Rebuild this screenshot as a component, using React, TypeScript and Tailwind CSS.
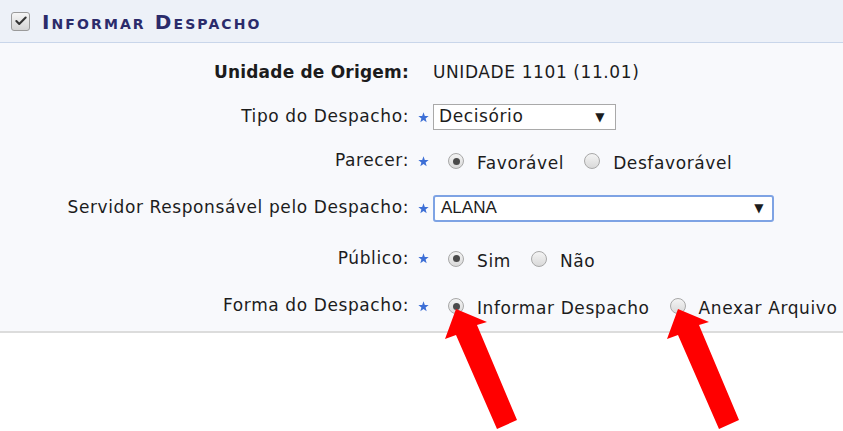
import { Check } from 'lucide-react';

const font = { fontFamily: '"DejaVu Sans", Verdana, sans-serif' };

function Star() {
  return (
    <svg viewBox="0 0 10 10" className="w-[11px] h-[11px]">
      <polygon
        points="5,0.3 6.2,3.6 9.7,3.7 6.9,5.8 7.9,9.3 5,7.2 2.1,9.3 3.1,5.8 0.3,3.7 3.8,3.6"
        fill="#3d6fd6"
      />
    </svg>
  );
}

function Radio({ checked }: { checked?: boolean }) {
  return (
    <span className="w-[16px] h-[16px] rounded-full border border-[#a8a8a8] bg-gradient-to-b from-[#f4f4f4] to-[#d9d9d9] flex items-center justify-center shrink-0">
      {checked && <span className="w-[7px] h-[7px] rounded-full bg-[#4a4a4a]" />}
    </span>
  );
}

function Option({ checked, label, first }: { checked?: boolean; label: string; first?: boolean }) {
  return (
    <span className={`flex items-center ${first ? 'ml-[15px]' : 'ml-[20px]'}`}>
      <Radio checked={checked} />
      <span className="ml-[13px] mt-[6px]">{label}</span>
    </span>
  );
}

function Row({ label, required = true, bold, h, children }: { label: string; required?: boolean; bold?: boolean; h: string; children: React.ReactNode }) {
  return (
    <div className={`flex items-center ${h}`}>
      <div className={`w-[409px] text-right ${bold ? 'font-bold tracking-[0.2px]' : ''}`}>{label}</div>
      <div className="w-[24px] flex pl-[9px]">{required && <Star />}</div>
      <div className="flex items-center">{children}</div>
    </div>
  );
}

export default function App() {
  return (
    <div className="w-[843px] h-[431px] bg-white relative overflow-hidden text-[17px] tracking-[0.6px] text-[#1c1c1c]" style={font}>
      {/* Header */}
      <div className="h-[43px] bg-[#edf1f8] border-b border-[#c9d6ea] flex items-center pl-[11px]">
        <span className="w-[19px] h-[19px] rounded-[3px] border border-[#9a9a9a] bg-gradient-to-b from-[#f6f6f6] to-[#d4d4d4] flex items-center justify-center">
          <Check className="w-[14px] h-[14px] text-[#333]" strokeWidth={3.5} />
        </span>
        <span className="ml-[12px] mt-[1px] font-bold text-[20px] text-[#2b2b6b] tracking-[2.1px] [font-variant:small-caps]">
          Informar Despacho
        </span>
      </div>

      {/* Body */}
      <div className="bg-[#f8f9fc] border-b-2 border-[#dcdcdc] pt-[7px] pb-[3px]">
        <Row label="Unidade de Origem:" required={false} bold h="h-[45px]">
          <span>UNIDADE 1101 (11.01)</span>
        </Row>
        <Row label="Tipo do Despacho:" h="h-[44px]">
          <div className="w-[183px] h-[26px] bg-white border border-[#a9a9a9] flex items-center justify-between pl-[5px] pr-[10px]">
            <span>Decisório</span>
            <span className="text-[12px]">▼</span>
          </div>
        </Row>
        <Row label="Parecer:" h="h-[44px]">
          <Option first checked label="Favorável" />
          <Option label="Desfavorável" />
        </Row>
        <Row label="Servidor Responsável pelo Despacho:" h="h-[50px]">
          <div className="w-[341px] h-[27px] bg-white border-2 border-[#7ea3e4] rounded-[3px] flex items-center justify-between pl-[6px] pr-[8px]">
            <span style={{ fontFamily: '"Liberation Sans", Arial, sans-serif' }} className="tracking-normal">ALANA</span>
            <span className="text-[12px]">▼</span>
          </div>
        </Row>
        <Row label="Público:" h="h-[51px]">
          <Option first checked label="Sim" />
          <Option label="Não" />
        </Row>
        <Row label="Forma do Despacho:" h="h-[44px]">
          <Option first checked label="Informar Despacho" />
          <Option label="Anexar Arquivo" />
        </Row>
      </div>

      {/* Annotation arrows */}
      <svg className="absolute left-0 top-0 w-[843px] h-[431px] pointer-events-none" viewBox="0 0 843 431">
        <polygon points="456,309 487,322 477,325 517,420 497,429 456,335 445,339" fill="#ff0000" />
        <polygon points="678,309 709,322 699,325 739,420 719,429 678,335 667,339" fill="#ff0000" />
      </svg>
    </div>
  );
}
